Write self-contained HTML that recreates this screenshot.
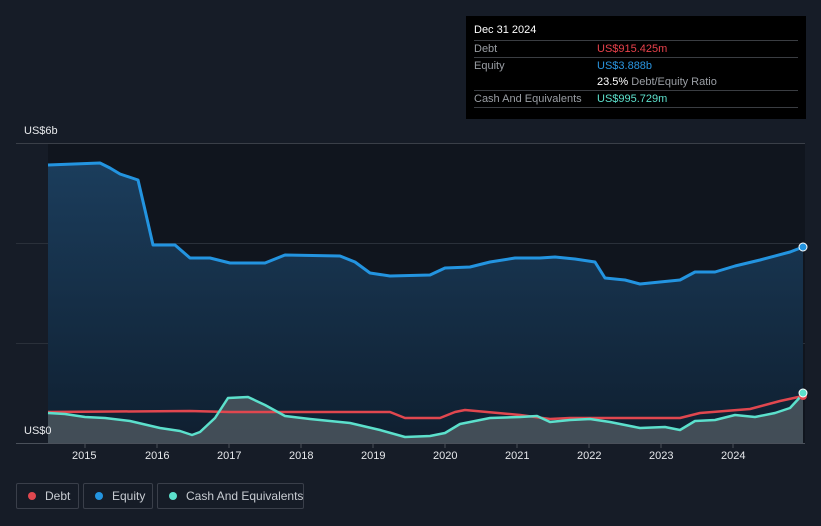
<!DOCTYPE html><html><head><meta charset="utf-8"><style>
body{margin:0;width:821px;height:526px;background:#161c27;font-family:"Liberation Sans",sans-serif;overflow:hidden;position:relative}
.tip{position:absolute;left:466px;top:16px;width:340px;height:103px;background:#000}
.tip .h{position:absolute;left:8px;top:8px;color:#fff;font-size:11px}
.row{position:absolute;left:8px;width:324px;border-top:1px solid #3a3d42;height:16px;font-size:11px;color:#9a9ea4}
.row span{position:absolute;left:123px;top:2px}
.row b{font-weight:normal;position:absolute;left:0;top:2px}
.leg{position:absolute;top:483px;height:26px;border:1px solid #3a3f4a;border-radius:2px;color:#c8ccd2;font-size:12px;line-height:24px;box-sizing:border-box;white-space:nowrap}
.leg i{position:absolute;left:11px;top:8px;width:8px;height:8px;border-radius:50%}
.ax{position:absolute;top:450px;color:#e6e8eb;font-size:11px}
</style></head><body>
<svg width="821" height="526" style="position:absolute;left:0;top:0">
<defs><linearGradient id="eg" x1="0" y1="0" x2="0" y2="1"><stop offset="0" stop-color="#1b3d5c"/><stop offset="1" stop-color="#0f1f30"/></linearGradient></defs>
<rect x="48" y="143" width="757" height="300" fill="#10151e"/>
<line x1="16" y1="143.5" x2="805" y2="143.5" stroke="#3a3f48"/>
<line x1="16" y1="243.5" x2="805" y2="243.5" stroke="#2a303a"/>
<line x1="16" y1="343.5" x2="805" y2="343.5" stroke="#2a303a"/>
<path d="M48,165 L100,163 110,168 120,174 138,180 145,210 153,245 175,245 190,258 210,258 230,263 265,263 285,255 340,256 355,262 370,273 390,276 430,275 445,268 470,267 490,262 515,258 540,258 555,257 575,259 595,262 605,278 625,280 640,284 660,282 680,280 695,272 715,272 735,266 760,260 790,252 803,247 L803,443 48,443Z" fill="url(#eg)"/>
<path d="M48,413 L65,414 85,417 105,418 130,421 160,428 180,431 192,435 200,432 215,418 228,398 248,397 265,405 285,416 310,419 350,423 380,430 405,437 430,436 445,433 460,424 490,418 520,417 537,416 550,422 570,420 590,419 610,422 640,428 665,427 680,430 695,421 715,420 735,415 755,417 775,413 790,408 803,394 L803,443 48,443Z" fill="#4b565e" opacity="0.85"/>
<path d="M48,412 L190,411 230,412 390,412 405,418 440,418 455,412 465,410 520,415 550,419 570,418 680,418 700,413 750,409 780,401 803,396" fill="none" stroke="#e0474f" stroke-width="2.5" stroke-linejoin="round"/>
<path d="M48,165 L100,163 110,168 120,174 138,180 145,210 153,245 175,245 190,258 210,258 230,263 265,263 285,255 340,256 355,262 370,273 390,276 430,275 445,268 470,267 490,262 515,258 540,258 555,257 575,259 595,262 605,278 625,280 640,284 660,282 680,280 695,272 715,272 735,266 760,260 790,252 803,247" fill="none" stroke="#2394e0" stroke-width="3" stroke-linejoin="round"/>
<path d="M48,413 L65,414 85,417 105,418 130,421 160,428 180,431 192,435 200,432 215,418 228,398 248,397 265,405 285,416 310,419 350,423 380,430 405,437 430,436 445,433 460,424 490,418 520,417 537,416 550,422 570,420 590,419 610,422 640,428 665,427 680,430 695,421 715,420 735,415 755,417 775,413 790,408 803,394" fill="none" stroke="#5ce0cc" stroke-width="2.5" stroke-linejoin="round"/>
<line x1="16" y1="443.5" x2="805" y2="443.5" stroke="#4a505a"/>
<g stroke="#4a505a"><line x1="85" y1="443" x2="85" y2="448"/><line x1="157" y1="443" x2="157" y2="448"/><line x1="229" y1="443" x2="229" y2="448"/><line x1="301" y1="443" x2="301" y2="448"/><line x1="373" y1="443" x2="373" y2="448"/><line x1="445" y1="443" x2="445" y2="448"/><line x1="517" y1="443" x2="517" y2="448"/><line x1="589" y1="443" x2="589" y2="448"/><line x1="661" y1="443" x2="661" y2="448"/><line x1="733" y1="443" x2="733" y2="448"/></g>
<circle cx="803" cy="247" r="4" fill="#2394e0" stroke="#fff" stroke-width="1"/>
<circle cx="803" cy="396" r="4" fill="#e0474f"/>
<circle cx="803" cy="393" r="4" fill="#5ce0cc" stroke="#fff" stroke-width="1"/>
</svg>
<div style="position:absolute;left:24px;top:125px;color:#e6e8eb;font-size:11px">US$6b</div>
<div style="position:absolute;left:24px;top:425px;color:#e6e8eb;font-size:11px">US$0</div>
<div class="ax" style="left:72px">2015</div><div class="ax" style="left:145px">2016</div><div class="ax" style="left:217px">2017</div><div class="ax" style="left:289px">2018</div><div class="ax" style="left:361px">2019</div><div class="ax" style="left:433px">2020</div><div class="ax" style="left:505px">2021</div><div class="ax" style="left:577px">2022</div><div class="ax" style="left:649px">2023</div><div class="ax" style="left:721px">2024</div>
<div class="tip"><div class="h">Dec 31 2024</div>
<div class="row" style="top:24px"><b>Debt</b><span style="color:#e8414b">US$915.425m</span></div>
<div class="row" style="top:41px"><b>Equity</b><span style="color:#2a95e0">US$3.888b</span></div>
<div class="row" style="top:58px;border:none"><span><span style="position:static;color:#fff">23.5%</span> Debt/Equity Ratio</span></div>
<div class="row" style="top:74px;border-bottom:1px solid #3a3d42"><b>Cash And Equivalents</b><span style="color:#5ce0cc">US$995.729m</span></div>
</div>
<div class="leg" style="left:16px;width:63px"><i style="background:#e0474f"></i><span style="position:absolute;left:28px">Debt</span></div>
<div class="leg" style="left:83px;width:70px"><i style="background:#2394e0"></i><span style="position:absolute;left:28px">Equity</span></div>
<div class="leg" style="left:157px;width:147px"><i style="background:#5ce0cc"></i><span style="position:absolute;left:28px">Cash And Equivalents</span></div>
</body></html>
